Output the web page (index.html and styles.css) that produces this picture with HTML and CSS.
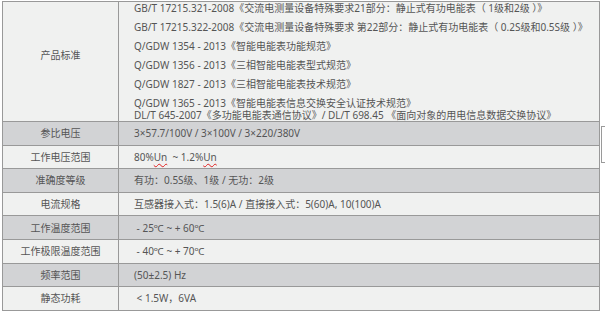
FILE: index.html
```html
<!DOCTYPE html>
<html lang="zh-CN">
<head>
  <meta charset="UTF-8" />
  <meta name="viewport" content="width=device-width, initial-scale=1.0"/>
  <title>技术参数</title>
  <link rel="stylesheet" href="styles.css">
</head>
<body>

<table class="spec">
  <tr class="light">
    <th class="std-label">产品标准</th>
    <td class="std-cell">
      <div class="std-list">
        <p>GB/T 17215.321-2008《交流电测量设备特殊要求21部分：静止式有功电能表（ 1级和2级 ）》</p>
        <p>GB/T 17215.322-2008《交流电测量设备特殊要求 第22部分：静止式有功电能表（ 0.2S级和0.5S级 ）》</p>
        <p>Q/GDW 1354 - 2013《智能电能表功能规范》</p>
        <p>Q/GDW 1356 - 2013《三相智能电能表型式规范》</p>
        <p>Q/GDW 1827 - 2013《三相智能电能表技术规范》</p>
        <p class="tight">Q/GDW 1365 - 2013《智能电能表信息交换安全认证技术规范》<br>DL/T 645-2007《多功能电能表通信协议》/ DL/T 698.45 《面向对象的用电信息数据交换协议》</p>
      </div>
    </td>
  </tr>
  <tr class="dark">
    <th>参比电压</th>
    <td>3×57.7/100V / 3×100V / 3×220/380V</td>
  </tr>
  <tr class="light">
    <th>工作电压范围</th>
    <td>80%<span class="typo">Un</span> &nbsp;~ 1.2%<span class="typo">Un</span></td>
  </tr>
  <tr class="dark">
    <th>准确度等级</th>
    <td>有功：0.5S级、1级 / 无功：2级</td>
  </tr>
  <tr class="light">
    <th>电流规格</th>
    <td>互感器接入式：1.5(6)A / 直接接入式：5(60)A, 10(100)A</td>
  </tr>
  <tr class="dark">
    <th>工作温度范围</th>
    <td>&nbsp;- 25℃ ~ + 60℃</td>
  </tr>
  <tr class="light">
    <th>工作极限温度范围</th>
    <td>&nbsp;- 40℃ ~ + 70℃</td>
  </tr>
  <tr class="dark">
    <th>频率范围</th>
    <td>(50±2.5) Hz</td>
  </tr>
  <tr class="light">
    <th>静态功耗</th>
    <td>&nbsp;&lt; 1.5W，6VA</td>
  </tr>
</table>

<div class="edge"></div>

</body>
</html>
```

FILE: styles.css
```css
body {
  margin: 0;
  padding: 1px 0 0 2px;
  display: flex;
  align-items: flex-start;
  background: #fff;
  font-family: "Noto Sans", "Noto Sans CJK SC", sans-serif;
  font-size: 10px;
  color: #555;
}

.spec {
  width: 600px;
  border-collapse: collapse;
  border: 1px solid #858585;
  border-top-color: #6e6e6e;
}

.spec th,
.spec td {
  border: 1px solid #999;
  padding: 0;
  height: 22.6px;
  line-height: 12px;
  font-weight: normal;
  white-space: nowrap;
}

.spec th {
  width: 115px;
  text-align: center;
}

.spec td {
  padding-left: 15px;
  text-align: left;
}

.light th, .light td {
  background: #f0f1f0;
}

.dark th, .dark td {
  background: #d2d3d5;
}

/* first row holds the list of standards */
.std-label {
  padding-bottom: 14px !important;
}

.std-cell {
  vertical-align: top;
}

.std-list {
  display: flex;
  flex-direction: column;
  gap: 7px;
}

.std-list p {
  margin: 0;
}

.typo {
  text-decoration: underline wavy #e02020;
  text-decoration-thickness: 1px;
  text-underline-offset: 2px;
}

/* bit of the neighbouring box peeking in at the right */
.edge {
  margin: 125px 0 0 1px;
  width: 3px;
  height: 35px;
  border: 1px solid #9a9a9a;
  border-right: none;
  background: #fff;
}
```
